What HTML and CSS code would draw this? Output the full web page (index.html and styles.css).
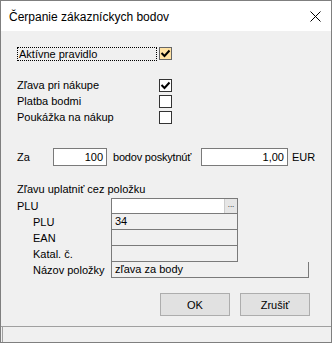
FILE: index.html
```html
<!DOCTYPE html>
<html lang="sk">
<head>
   <meta charset="UTF-8">
   <title>Čerpanie zákazníckych bodov</title>
   <link rel="stylesheet" href="styles.css">
</head>
<body>
   <div class="window">
      <div class="titlebar">
         <span class="title">Čerpanie zákazníckych bodov</span>
         <svg class="close" width="11" height="11" viewBox="0 0 11 11">
            <path d="M0.5 0.5 L10.5 10.5 M10.5 0.5 L0.5 10.5" stroke="#000" stroke-width="1" fill="none"/>
         </svg>
      </div>
      <div class="content">
         <div class="check-row">
            <span class="check-label"><span class="focus">Aktívne pravidlo</span></span>
            <span class="checkbox hot">
               <svg width="11" height="11" viewBox="0 0 11 11"><path d="M1.5 5 L4.5 8 L9.5 2.5" stroke="#000" stroke-width="2" fill="none"/></svg>
            </span>
         </div>
         <div class="check-group">
            <div class="check-row">
               <span class="check-label">Zľava pri nákupe</span>
               <span class="checkbox">
                  <svg width="11" height="11" viewBox="0 0 11 11"><path d="M1.5 5 L4.5 8 L9.5 2.5" stroke="#000" stroke-width="2" fill="none"/></svg>
               </span>
            </div>
            <div class="check-row">
               <span class="check-label">Platba bodmi</span>
               <span class="checkbox"></span>
            </div>
            <div class="check-row">
               <span class="check-label">Poukážka na nákup</span>
               <span class="checkbox"></span>
            </div>
         </div>
         <div class="amount-row">
            <span class="za-label">Za</span>
            <span class="num-box points">100</span>
            <span class="mid-label">bodov poskytnúť</span>
            <span class="num-box money">1,00</span>
            <span class="cur-label">EUR</span>
         </div>
         <div class="section-label">Zľavu uplatniť cez položku</div>
         <div class="item-grid">
            <div class="grid-label">PLU</div>
            <div class="combo"><span class="combo-text"></span><span class="combo-btn">...</span></div>
            <div class="grid-label sub">PLU</div>
            <div class="readonly">34</div>
            <div class="grid-label sub">EAN</div>
            <div class="readonly"></div>
            <div class="grid-label sub">Katal. č.</div>
            <div class="readonly"></div>
            <div class="grid-label sub">Názov položky</div>
            <div class="readonly wide">zľava za body</div>
         </div>
         <div class="buttons">
            <button class="btn">OK</button>
            <button class="btn">Zrušiť</button>
         </div>
      </div>
      <div class="statusbar"><div class="status-panel"></div></div>
   </div>
</body>
</html>
```

FILE: styles.css
```css
body {
   margin: 0;
   font-family: 'Liberation Sans', Arial, sans-serif;
   font-size: 11px;
   color: #000;
}
.window {
   width: 332px;
   height: 343px;
   box-sizing: border-box;
   border: 1px solid #7f7f7f;
   display: flex;
   flex-direction: column;
   background-color: #f0f0f0;
}
.titlebar {
   height: 30px;
   background-color: #fff;
   display: flex;
   align-items: center;
   justify-content: space-between;
   padding: 0 10px 0 8px;
}
.title {
   font-size: 12px;
   margin-top: 1px;
}
.close {
   margin-top: 1px;
}
.content {
   flex: 1;
   padding: 16px 0 0 16px;
}
.check-row {
   display: flex;
   align-items: center;
   height: 13px;
}
.check-label {
   width: 142px;
   line-height: 13px;
}
.focus {
   display: block;
   width: 140px;
   height: 14px;
   box-sizing: border-box;
   border: 1px dotted #000;
   line-height: 12px;
   padding-left: 1px;
}
.checkbox {
   width: 13px;
   height: 13px;
   box-sizing: border-box;
   border: 1px solid #333;
   background-color: #fff;
   display: flex;
}
.checkbox.hot {
   background-color: #ffe2a4;
   border-color: #666;
}
.check-group {
   margin-top: 19px;
   display: flex;
   flex-direction: column;
   gap: 3px;
}
.amount-row {
   margin-top: 24px;
   display: flex;
   align-items: center;
   height: 18px;
}
.za-label {
   width: 36px;
}
.num-box {
   height: 18px;
   box-sizing: border-box;
   border: 1px solid #7a7a7a;
   background-color: #fff;
   text-align: right;
   padding-right: 3px;
   line-height: 16px;
}
.num-box.points {
   width: 54px;
}
.num-box.money {
   width: 87px;
}
.mid-label {
   width: 94px;
   box-sizing: border-box;
   padding-left: 6px;
   letter-spacing: -0.2px;
}
.cur-label {
   padding-left: 4px;
}
.section-label {
   margin-top: 16px;
   line-height: 14px;
}
.item-grid {
   margin-top: 2px;
   display: grid;
   grid-template-columns: 94px auto;
   grid-auto-rows: 16px;
   justify-items: start;
}
.grid-label {
   display: flex;
   align-items: center;
}
.grid-label.sub {
   padding-left: 16px;
}
.combo {
   width: 127px;
   height: 16px;
   box-sizing: border-box;
   border: 1px solid #7a7a7a;
   background-color: #fff;
   display: flex;
}
.combo-text {
   flex: 1;
}
.combo-btn {
   width: 12px;
   border-left: 1px solid #ccc;
   background-color: #e6e6e6;
   color: #000;
   font-size: 8px;
   text-align: center;
   line-height: 12px;
}
.readonly {
   width: 127px;
   height: 16px;
   box-sizing: border-box;
   border: 1px solid #7a7a7a;
   border-top: 0;
   padding-left: 3px;
   line-height: 15px;
}
.readonly.wide {
   width: 198px;
}
.buttons {
   margin-top: 15px;
   display: flex;
   gap: 10px;
   padding-left: 143px;
}
.btn {
   width: 70px;
   height: 23px;
   background-color: #e1e1e1;
   border: 1px solid #adadad;
   font-family: 'Liberation Sans', Arial, sans-serif;
   font-size: 11px;
   color: #000;
   padding: 0;
}
.statusbar {
   height: 16px;
   box-sizing: border-box;
   border-top: 1px solid #a0a0a0;
   padding-left: 1px;
}
.status-panel {
   height: 100%;
   border-left: 1px solid #a0a0a0;
}
```
